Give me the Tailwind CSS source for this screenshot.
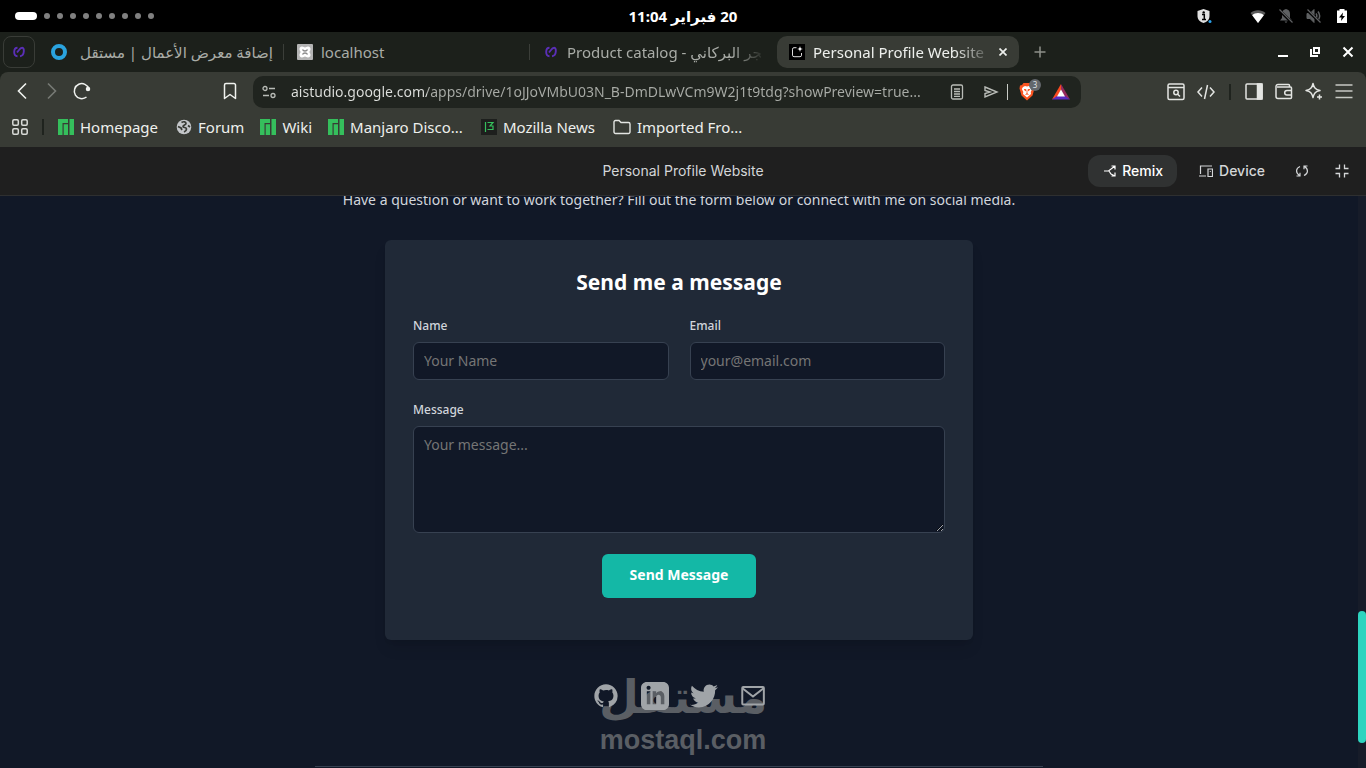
<!DOCTYPE html>
<html lang="en">
<head>
  <meta charset="UTF-8" />
  <meta name="viewport" content="width=device-width, initial-scale=1.0" />
  <title>Personal Profile Website</title>
  <script src="https://cdn.jsdelivr.net/npm/@tailwindcss/browser@4"></script>
</head>
<body class="h-screen flex flex-col overflow-hidden bg-black font-['Noto_Sans','DejaVu_Sans',sans-serif] text-[15px] leading-[21px] text-[#e6e8e5]">

  <!-- Desktop top bar -->
  <header class="h-8 shrink-0 grid grid-cols-3 items-center px-4 bg-black text-white">
    <div class="flex items-center gap-[7px]">
      <span class="w-[22px] h-2 -ml-px rounded-full bg-white"></span>
      <span class="size-1.5 rounded-full bg-[#808080]"></span>
      <span class="size-1.5 rounded-full bg-[#808080]"></span>
      <span class="size-1.5 rounded-full bg-[#808080]"></span>
      <span class="size-1.5 rounded-full bg-[#808080]"></span>
      <span class="size-1.5 rounded-full bg-[#808080]"></span>
      <span class="size-1.5 rounded-full bg-[#808080]"></span>
      <span class="size-1.5 rounded-full bg-[#808080]"></span>
      <span class="size-1.5 rounded-full bg-[#808080]"></span>
      <span class="size-1.5 rounded-full bg-[#808080]"></span>
    </div>
    <time dir="rtl" lang="ar" class="text-center font-bold">20 فبراير 11:04</time>
    <div class="flex items-center justify-end gap-3">
      <svg class="size-4 mr-[26px]" viewBox="0 0 16 16"><path d="M7.500 1 13.500 3v5c0 3.500-2.500 6-6 7-3.500-1-6-3.500-6-7V3z" fill="#e0e0e0"/><path d="M6 6.500h2.300v5M6 11.500h4" stroke="#000" stroke-width="1.500" fill="none"/><circle cx="7.700" cy="4.400" r="1.200" fill="#000"/><circle cx="14" cy="13.500" r="1.500" fill="#2a9fe8"/></svg>
      <svg class="size-4" viewBox="0 0 16 16"><path d="M8 15 .5 5C4.500 1.200 11.500 1.200 15.500 5z" fill="#5a5a5a"/><path d="M8 15 2.200 7.200C5 4.300 11 4.300 13.800 7.200z" fill="#fff"/></svg>
      <svg class="size-4" viewBox="0 0 16 16"><path d="M8 1c-3 .8-4 2.500-4 5v4l-2 2.500h12L12 10V6c0-2.500-1-4.200-4-5zM6.500 13.500h3L8 15z" fill="#5e6062"/><path d="m2 3 12.500 12" stroke="#000" stroke-width="3"/><path d="m1.500 1.500 13 13" stroke="#5e6062" stroke-width="1.300"/></svg>
      <svg class="size-4" viewBox="0 0 16 16" fill="none" stroke="#5e6062"><path d="M1 5.500h3l4-4v13l-4-4H1z" fill="#5e6062"/><path d="M10 5.500c1 1.500 1 3.500 0 5M12 3.500c2 2.700 2 6.300 0 9" stroke-width="1.500"/><path d="m2 3 12.500 12" stroke="#000" stroke-width="2.500"/><path d="m1.500 1.500 13 13" stroke-width="1.300"/></svg>
      <svg class="size-4" viewBox="0 0 16 16"><path d="M5.500 1h5v1.500H13V15H3V2.500h2.500z" fill="#fff"/><path d="M9 4.500 5 9.500h2.500L7 13l4-5H8.500z" fill="#000"/></svg>
    </div>
  </header>

  <!-- Browser tabs -->
  <div role="tablist" class="h-10 shrink-0 flex items-center bg-[#1c201b] pl-[3px] text-[#a9aca7]">
    <button role="tab" aria-label="Pinned tab" class="size-8 mr-1 shrink-0 flex items-center justify-center rounded-lg border border-[#393c37]">
      <svg class="size-3" viewBox="0 0 12 12" fill="none" stroke="#5b2fb8" stroke-width="1.900"><path d="M4.500 1.800C2 1.800 1.200 3 1.200 6S2 10.200 4.500 10.200M4 6.500 6 4c1-1.500 2-2.200 3.200-2.200 1.300 0 1.800 1.400 1.600 3.700C10.600 8.500 9.500 10 7 10.200"/></svg>
    </button>
    <div role="tab" class="w-[242px] h-8 flex items-center pl-3 pr-2">
      <svg class="size-4 mr-3 shrink-0" viewBox="0 0 16 16"><circle cx="8" cy="8" r="6" fill="none" stroke="#2aa3df" stroke-width="4"/></svg>
      <span dir="rtl" lang="ar" class="flex-1 overflow-hidden whitespace-nowrap">إضافة معرض الأعمال | مستقل</span>
    </div>
    <span class="w-px h-4 ml-0.5 mr-px bg-[#3b3e39]"></span>
    <div role="tab" class="w-[242px] h-8 flex items-center gap-2 pl-3 pr-3">
      <svg class="size-4 shrink-0" viewBox="0 0 16 16"><rect width="16" height="16" rx="1" fill="#b4b4b4"/><path d="M5 2.500c1.500 0 2 1 3 1s1.500-1 3-1 2.500 1 2.500 2.500S12.500 7 12.500 8s1 1.500 1 3-1 2.500-2.500 2.500-2-1-3-1-1.500 1-3 1S2.500 12.500 2.500 11s1-2 1-3-1-1.500-1-3S3.500 2.500 5 2.500z" fill="#fff"/><path d="M5.500 5.500c1 2 4 2 5 0M5.500 10.500c1-2 4-2 5 0" fill="none" stroke="#8a8a8a" stroke-width="1.400"/></svg>
      <span>localhost</span>
    </div>
    <span class="w-px h-4 ml-0.5 mr-px bg-[#3b3e39]"></span>
    <div role="tab" class="w-[242px] h-8 flex items-center gap-2 pl-3 pr-3">
      <svg class="size-4 p-0.5 shrink-0" viewBox="0 0 12 12" fill="none" stroke="#5b2fb8" stroke-width="1.900"><path d="M4.500 1.800C2 1.800 1.200 3 1.200 6S2 10.200 4.500 10.200M4 6.500 6 4c1-1.500 2-2.200 3.200-2.200 1.300 0 1.800 1.400 1.600 3.700C10.600 8.500 9.500 10 7 10.200"/></svg>
      <span class="w-[196px] overflow-hidden whitespace-nowrap [mask-image:linear-gradient(90deg,#000_85%,transparent_102%)]">Product catalog - متجر البركاني</span>
    </div>
    <div role="tab" aria-selected="true" class="w-[242px] h-8 ml-1 flex items-center gap-2 pl-3 pr-2 rounded-[10px] bg-[#383b35] text-[#eef0ed]">
      <svg class="size-4 shrink-0" viewBox="0 0 16 16"><path d="M0 0h16v16H0z" fill="#000"/><path d="M7.500 3.700H5A1.500 1.500 0 0 0 3.500 5.200v6A1.500 1.500 0 0 0 5 12.700h6a1.500 1.500 0 0 0 1.500-1.500V9" fill="none" stroke="#ddd"/><path d="M11 2c.3 2 1 2.700 3 3-2 .3-2.700 1-3 3-.3-2-1-2.700-3-3 2-.3 2.700-1 3-3z" fill="#fff"/></svg>
      <span class="w-[172px] overflow-hidden whitespace-nowrap [mask-image:linear-gradient(90deg,#000_82%,transparent_105%)]">Personal Profile Website</span>
      <button aria-label="Close tab" class="size-4 ml-auto flex items-center justify-center">
        <svg class="size-2" viewBox="0 0 8 8" stroke="#eef0ed" stroke-width="1.700"><path d="m.5.5 7 7m0-7-7 7"/></svg>
      </button>
    </div>
    <button aria-label="New tab" class="size-4 ml-[13px] flex items-center justify-center">
      <svg class="size-3" viewBox="0 0 12 12" stroke="#8d908b" stroke-width="1.500"><path d="M6 .5v11M.5 6h11"/></svg>
    </button>
    <div class="ml-auto mr-[10px] flex gap-4">
      <button aria-label="Minimize" class="size-4"><svg class="size-4" viewBox="0 0 16 16"><path d="M3 11h10v2H3z" fill="#fff"/></svg></button>
      <button aria-label="Restore" class="size-4"><svg class="size-4" viewBox="0 0 16 16" fill="none" stroke="#fff" stroke-width="2"><path d="M7 4h5v5H7z"/><path d="M4 5v7h7"/></svg></button>
      <button aria-label="Close window" class="size-4 ml-px"><svg class="size-4" viewBox="0 0 16 16" stroke="#fff" stroke-width="2"><path d="m3.500 3.500 9 9m0-9-9 9"/></svg></button>
    </div>
  </div>

  <div class="bg-[#1c201b] shrink-0">
    <div class="rounded-t-lg bg-[#383b35] h-[75px] pt-1">
      <!-- Address row -->
      <div class="h-8 flex items-center">
        <div class="w-[253px] shrink-0 flex items-center pl-3 pr-[13px] gap-[10px] -mt-0.5">
          <button aria-label="Back"><svg class="size-5" viewBox="0 0 20 20" fill="none" stroke="#f0f2ef" stroke-width="1.600"><path d="M14 2.500 6.500 10l7.500 7.500"/></svg></button>
          <button aria-label="Forward"><svg class="size-5" viewBox="0 0 20 20" fill="none" stroke="#777a75" stroke-width="1.600"><path d="m6 2.500 7.500 7.500L6 17.500"/></svg></button>
          <button aria-label="Reload"><svg class="size-5" viewBox="0 0 20 20" fill="none" stroke="#f0f2ef" stroke-width="1.500"><path d="M14.500 16A7.500 7.500 0 1 1 17 8"/><circle cx="16" cy="8" r="1.500" fill="#f0f2ef"/></svg></button>
          <button aria-label="Bookmark this page" class="ml-auto"><svg class="size-5" viewBox="0 0 20 20" fill="none" stroke="#f0f2ef" stroke-width="1.500"><path d="M4.500 17.500V4A1.500 1.500 0 0 1 6 2.500h8A1.500 1.500 0 0 1 15.500 4v13.500L10 13.500z" stroke-linejoin="round"/></svg></button>
        </div>
        <div class="flex-1 min-w-0 h-8 flex items-center rounded-[10px] bg-[#20241f] pl-2 pr-[11px]">
          <svg class="size-4 mr-[14px] shrink-0" viewBox="0 0 16 16" fill="none" stroke="#b9bcb7" stroke-width="1.300"><circle cx="4" cy="4.500" r="2"/><path d="M8 4.500h6M2 11.500h6"/><circle cx="12" cy="11.500" r="2"/></svg>
          <input type="text" aria-label="Address" value="aistudio.google.com/apps/drive/1oJJoVMbU03N_B-DmDLwVCm9W2j1t9tdg?showPreview=true..." class="flex-1 min-w-0 h-6 pb-px text-sm outline-none text-transparent bg-clip-text bg-[linear-gradient(90deg,#dfe1de_136px,#a9aca7_136px)]" />
          <div class="flex items-center shrink-0">
            <svg class="size-4 mr-[18px]" viewBox="0 0 16 16" fill="none" stroke="#b9bcb7" stroke-width="1.300"><rect x="2.500" y="1" width="11" height="14" rx="1.500"/><path d="M5 5h6M5 7.500h6M5 10h6M5 12.300h6"/></svg>
            <svg class="size-4 mr-2" viewBox="0 0 16 16" fill="none" stroke="#b9bcb7" stroke-width="1.400"><path d="m2 3 12 5-12 5V9.500L7 8 2 6.500z"/></svg>
            <span class="w-px h-4 mr-[10px] bg-[#c9ccc7]"></span>
            <div class="relative mr-[14px]">
              <svg class="w-5 h-[18px]" viewBox="0 0 20 18"><path d="M5.500 0h7l1.500 2 2 .5.500 3-2 7-5.500 5-5.500-5-2-7 .5-3L4 2z" fill="#fb5420"/><path d="m9 3.500 2-.5 2 1 1.200 2-1.500 3 .3 2L9 14.500 5 11l.3-2-1.500-3L5 4l2-1z" fill="#fff"/><path d="M6 6.500h2L8 8zm6 0h-2l0 1.500zM9 8v2.500m-1.500 1L9 10.500l1.500 1" fill="#fb5420" stroke="#fb5420" stroke-width=".8"/></svg>
              <span class="absolute left-[11px] -top-1 size-3 rounded-full bg-[#63676c] text-[8px] leading-3 text-center text-[#dde0e3]">3</span>
            </div>
            <svg class="size-[18px]" viewBox="0 0 18 18"><path d="M9 1 0 16.500l6-3L9 7z" fill="#fb4a20"/><path d="M9 1v6l3 6 6 3.500z" fill="#962a5e"/><path d="m0 16.500 5-3.500h8l5 3.500z" fill="#5a2bc0"/><path d="m9 6.500 4 7H5z" fill="#fff"/></svg>
          </div>
        </div>
        <div class="w-[285px] shrink-0 flex items-center justify-end gap-[10px] pr-3 text-[#e3e5e2]">
          <button aria-label="Search tabs"><svg class="size-5" viewBox="0 0 20 20" fill="none" stroke="currentColor" stroke-width="1.500"><rect x="2" y="2" width="16" height="15.500" rx="1.500"/><path d="M2 5.500h16M11.700 12.200l2.300 2.300"/><circle cx="10" cy="10.500" r="2.200"/></svg></button>
          <button aria-label="Developer tools"><svg class="size-5" viewBox="0 0 20 20" fill="none" stroke="currentColor" stroke-width="1.500"><path d="M6 5.500 2 10l4 4.500M14 5.500l4 4.500-4 4.500M11.500 3l-3 14"/></svg></button>
          <span class="w-0.5 h-4 mx-[3px] bg-[#1f231e]"></span>
          <button aria-label="Sidebar"><svg class="size-5" viewBox="0 0 20 20" fill="none" stroke="currentColor" stroke-width="1.500"><rect x="2" y="2" width="16" height="15" rx="1"/><path d="M13.500 2H18v15h-4.500z" fill="currentColor"/></svg></button>
          <button aria-label="Wallet"><svg class="size-5" viewBox="0 0 20 20" fill="none" stroke="currentColor" stroke-width="1.500"><path d="M15.500 5V3.500a1 1 0 0 0-1-1H4A2 2 0 0 0 2 4.500v10a2 2 0 0 0 2 2h12.500a1 1 0 0 0 1-1V6a1 1 0 0 0-1-1H3M17.500 8.500H13a2.300 2.300 0 0 0 0 4.600h4.500"/></svg></button>
          <button aria-label="Assistant"><svg class="size-5" viewBox="0 0 20 20" fill="none" stroke="currentColor" stroke-width="1.500"><path d="M9 1.500c1 4.500 2.500 6 7 7-4.500 1-6 2.500-7 7-1-4.500-2.500-6-7-7 4.500-1 6-2.500 7-7z" stroke-linejoin="round"/><path d="M15.500 12.500v5M13 15h5"/></svg></button>
          <button aria-label="Menu"><svg class="size-5" viewBox="0 0 20 20" stroke="#c6c9c4" stroke-width="1.700"><path d="M1.500 3h17M1.500 9h17M1.500 15.500h17"/></svg></button>
        </div>
      </div>
      <!-- Bookmarks bar -->
      <nav class="h-[38px] flex items-center pl-3 text-[#eef0ed]">
        <button aria-label="All apps" class="mr-3"><svg class="size-4" viewBox="0 0 16 16" fill="none" stroke="#d9dbd8" stroke-width="1.500"><rect x=".8" y=".8" width="5.500" height="5.500" rx="1.200"/><rect x="9.700" y=".8" width="5.500" height="5.500" rx="1.200"/><rect x=".8" y="9.700" width="5.500" height="5.500" rx="1.200"/><rect x="9.700" y="9.700" width="5.500" height="5.500" rx="1.200"/></svg></button>
        <span class="w-0.5 h-4 mr-[14px] ml-0.5 bg-[#1f231e]"></span>
        <a href="#" class="flex items-center gap-1.5 mr-[18px]"><svg class="size-4" viewBox="0 0 16 16" fill="#35bf5c"><path d="M0 0h10v4H4.500v12H0zM5.700 5.300H10V16H5.700zM11.500 0H16v16h-4.500z"/></svg>Homepage</a>
        <a href="#" class="flex items-center gap-1.5 mr-4"><svg class="size-4" viewBox="0 0 16 16"><circle cx="8" cy="8" r="7.300" fill="#c3c6c9"/><path d="M5.500 3.500C8 2 10 3 10 4.500S7 6 7 7.500s3.500.5 3.500 2.500S8 13 8 13M2 7.500l3 1.500 1 2M12 6.500l2 1.500" fill="none" stroke="#383b35" stroke-width="1.700"/></svg>Forum</a>
        <a href="#" class="flex items-center gap-1.5 mr-4"><svg class="size-4" viewBox="0 0 16 16" fill="#35bf5c"><path d="M0 0h10v4H4.500v12H0zM5.700 5.300H10V16H5.700zM11.500 0H16v16h-4.500z"/></svg>Wiki</a>
        <a href="#" class="flex items-center gap-1.5 mr-[18px]"><svg class="size-4" viewBox="0 0 16 16" fill="#35bf5c"><path d="M0 0h10v4H4.500v12H0zM5.700 5.300H10V16H5.700zM11.500 0H16v16h-4.500z"/></svg>Manjaro Disco...</a>
        <a href="#" class="flex items-center gap-1.5 mr-[18px]"><svg class="size-4" viewBox="0 0 16 16"><path d="M0 0h16v16H0z" fill="#1d1f1d"/><path d="M4.500 3v10M6.500 3.500H12L9 7h3v3.500H6.500" fill="none" stroke="#35bf5c" stroke-width="1.200"/></svg>Mozilla News</a>
        <a href="#" class="flex items-center gap-1.5"><svg class="size-[18px]" viewBox="0 0 18 18" fill="none" stroke="#e3e5e2" stroke-width="1.400"><path d="M1 14V4a1.500 1.500 0 0 1 1.500-1.500H6L8 4.500h7.500A1.500 1.500 0 0 1 17 6v8a1.500 1.500 0 0 1-1.500 1.500h-13A1.500 1.500 0 0 1 1 14z"/></svg>Imported Fro...</a>
      </nav>
    </div>
  </div>

  <!-- Preview toolbar -->
  <div class="h-[49px] shrink-0 grid grid-cols-[1fr_auto_1fr] items-center bg-[#1f1f1f] border-b border-[#2e2f30] px-4 font-[Inter,sans-serif] text-sm text-[#d4d6d8]">
    <h1 class="col-start-2">Personal Profile Website</h1>
    <div class="flex items-center justify-end font-medium">
      <button class="h-8 flex items-center gap-1.5 pl-4 pr-[14px] mr-[22px] rounded-xl bg-[#303232] text-white">
        <svg class="size-3" viewBox="0 0 12 12" fill="none" stroke="currentColor" stroke-width="1.200"><path d="M0 6h4.500L11 1M7.500 1H11v3.500M4.500 6c1 0 1.500 2 2.500 3l4 2M7.500 11H11V7.500"/></svg>Remix
      </button>
      <button class="h-8 flex items-center gap-1.5 mr-[21px]">
        <svg class="size-[14px]" viewBox="0 0 14 14" fill="none" stroke="currentColor" stroke-width="1.200"><path d="M13 2H1.500v8M0 12h7M9 5h4.500v7.500H9zM10.800 7.500h1"/></svg>Device
      </button>
      <button aria-label="Reload app" class="size-8 flex items-center justify-center"><svg class="size-[14px]" viewBox="0 0 14 14" fill="none" stroke="currentColor" stroke-width="1.200"><path d="M5 2.500C.5 4.500.5 9 4.500 11.500M1.500 12h3.500V8.700M9 11.500c4.500-2 4.500-6.500.5-9M12.500 2H9v3.300"/></svg></button>
      <button aria-label="Exit fullscreen" class="size-8 ml-2 -mr-2 flex items-center justify-center"><svg class="size-[14px]" viewBox="0 0 14 14" fill="none" stroke="currentColor" stroke-width="1.300"><path d="M4.500.5v4H.5M9.500.5v4h4M4.500 13.500v-4H.5M9.500 13.500v-4h4"/></svg></button>
    </div>
  </div>

  <!-- Previewed page -->
  <main class="flex-1 min-h-0 flex overflow-hidden bg-[#111827] text-sm">
    <section class="flex-1 min-w-0 -mt-2 text-[#d1d5db]">
      <p class="text-center leading-6">Have a question or want to work together? Fill out the form below or connect with me on social media.</p>

      <form class="max-w-[588px] mx-auto mt-7 px-7 pt-7 pb-[42px] rounded-md bg-[#202937] shadow-lg">
        <h2 class="mb-5 text-center text-[21px] leading-7 font-bold text-white">Send me a message</h2>
        <div class="grid grid-cols-2 gap-[21px] mb-5">
          <div>
            <label for="name" class="block mb-1.5 text-xs/5 font-medium">Name</label>
            <input id="name" type="text" placeholder="Your Name" class="block w-full h-[38px] px-2.5 pb-0.5 rounded-md border border-[#374151] bg-[#111827] placeholder:text-[#757575]" />
          </div>
          <div>
            <label for="email" class="block mb-1.5 text-xs/5 font-medium">Email</label>
            <input id="email" type="email" placeholder="your@email.com" class="block w-full h-[38px] px-2.5 pb-0.5 rounded-md border border-[#374151] bg-[#111827] placeholder:text-[#757575]" />
          </div>
        </div>
        <label for="message" class="block mb-1.5 text-xs/5 font-medium">Message</label>
        <textarea id="message" placeholder="Your message..." class="block w-full h-[107px] mb-[21px] px-2.5 py-2 rounded-md border border-[#374151] bg-[#111827] placeholder:text-[#757575]"></textarea>
        <button type="submit" class="block h-11 mx-auto px-7 pb-0.5 rounded-md bg-[#14b8a6] font-bold text-white">Send Message</button>
      </form>

      <!-- Social links -->
      <div class="relative w-fit mx-auto mt-[42px]">
        <!-- Watermark -->
        <div class="absolute left-[calc(50%+4px)] -translate-x-1/2 -top-4 flex flex-col items-center font-bold text-[#5a5e64]">
          <span dir="rtl" lang="ar" class="text-[46px] leading-[58px]">مستقل</span>
          <span class="font-['Liberation_Sans',sans-serif] text-[27px] leading-8">mostaql.com</span>
        </div>
        <div class="relative flex gap-[21px] text-[#a0a4a8]">
          <a href="#" aria-label="GitHub"><svg class="size-7" viewBox="0 0 24 24" fill="currentColor"><path fill-rule="evenodd" clip-rule="evenodd" d="M12 2C6.477 2 2 6.484 2 12.017c0 4.425 2.865 8.180 6.839 9.504.5.092.682-.217.682-.483 0-.237-.008-.868-.013-1.703-2.782.605-3.369-1.343-3.369-1.343-.454-1.158-1.110-1.466-1.110-1.466-.908-.620.069-.608.069-.608 1.003.070 1.531 1.032 1.531 1.032.892 1.530 2.341 1.088 2.910.832.092-.647.350-1.088.636-1.338-2.220-.253-4.555-1.113-4.555-4.951 0-1.093.390-1.988 1.029-2.688-.103-.253-.446-1.272.098-2.650 0 0 .840-.270 2.750 1.026A9.564 9.564 0 0112 6.844c.850.004 1.705.115 2.504.337 1.909-1.296 2.747-1.027 2.747-1.027.546 1.379.202 2.398.100 2.651.640.700 1.028 1.595 1.028 2.688 0 3.848-2.339 4.695-4.566 4.943.359.309.678.920.678 1.855 0 1.338-.012 2.419-.012 2.747 0 .268.180.580.688.482A10.019 10.019 0 0022 12.017C22 6.484 17.522 2 12 2z"/></svg></a>
          <a href="#" aria-label="LinkedIn"><svg class="size-7" viewBox="0 0 24 24" fill="currentColor"><path d="M19 0h-14c-2.761 0-5 2.239-5 5v14c0 2.761 2.239 5 5 5h14c2.762 0 5-2.239 5-5v-14c0-2.761-2.238-5-5-5zm-11 19h-3v-11h3v11zm-1.500-12.268c-.966 0-1.750-.790-1.750-1.764s.784-1.764 1.750-1.764 1.750.790 1.750 1.764-.783 1.764-1.750 1.764zm13.500 12.268h-3v-5.604c0-3.368-4-3.113-4 0v5.604h-3v-11h3v1.765c1.396-2.586 7-2.777 7 2.476v6.759z"/></svg></a>
          <a href="#" aria-label="Twitter"><svg class="size-7" viewBox="0 0 24 24" fill="currentColor"><path d="M24 4.557c-.883.392-1.832.656-2.828.775 1.017-.609 1.798-1.574 2.165-2.724-.951.564-2.005.974-3.127 1.195-.897-.957-2.178-1.555-3.594-1.555-3.179 0-5.515 2.966-4.797 6.045-4.091-.205-7.719-2.165-10.148-5.144-1.290 2.213-.669 5.108 1.523 6.574-.806-.026-1.566-.247-2.229-.616-.054 2.281 1.581 4.415 3.949 4.890-.693.188-1.452.232-2.224.084.626 1.956 2.444 3.379 4.600 3.419-2.070 1.623-4.678 2.348-7.290 2.040 2.179 1.397 4.768 2.212 7.548 2.212 9.142 0 14.307-7.721 13.995-14.646.962-.695 1.797-1.562 2.457-2.549z"/></svg></a>
          <a href="#" aria-label="Email"><svg class="size-7" viewBox="0 0 24 24" fill="none" stroke="currentColor" stroke-width="1.700"><rect x="2.800" y="4.300" width="18.500" height="15" rx=".8"/><path d="m3.200 5.500 8.800 7 8.800-7"/></svg></a>
        </div>
      </div>

      <footer class="max-w-[728px] mx-auto mt-14 border-t border-[#374151]"></footer>
    </section>
    <!-- Scrollbar -->
    <div class="w-2 flex flex-col justify-end pb-[25px] bg-[#171c29]">
      <span class="h-[132px] rounded-full bg-[#2dd4bf]"></span>
    </div>
  </main>

</body>
</html>
